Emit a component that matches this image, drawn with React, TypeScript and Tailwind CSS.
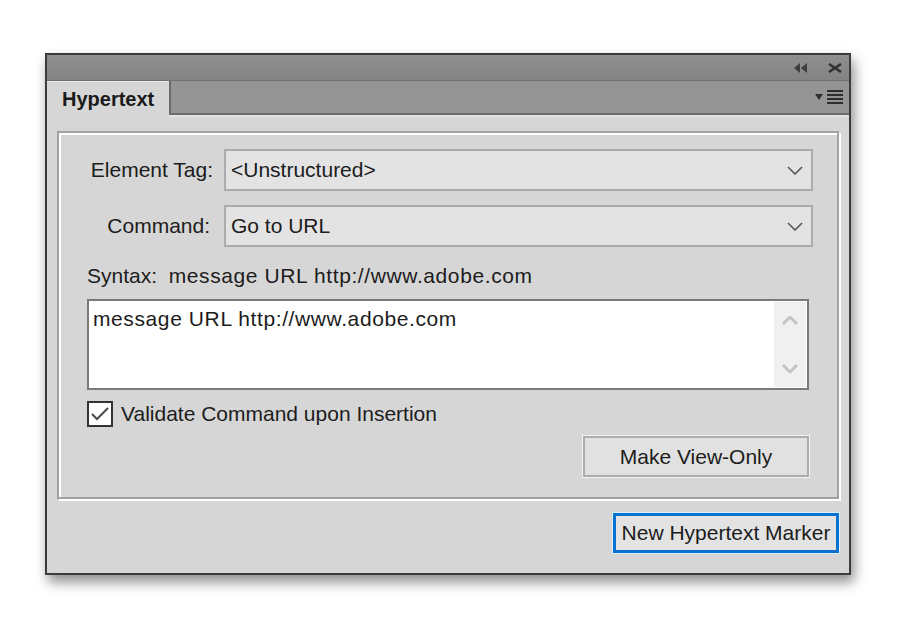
import React from "react";

const Chevron = ({ up = false, color = "#555555", width = 1.6 }: { up?: boolean; color?: string; width?: number }) => (
  <svg width="16" height="9" viewBox="0 0 16 9">
    <polyline
      points={up ? "1,8 8,1 15,8" : "1,1 8,8 15,1"}
      fill="none"
      stroke={color}
      strokeWidth={width}
    />
  </svg>
);

const Dropdown = ({ value }: { value: string }) => (
  <div className="flex-1 h-[42px] flex items-center justify-between border-2 border-[#ababab] bg-[#e3e3e3] pl-[5px] pr-[8px]">
    <span>{value}</span>
    <Chevron />
  </div>
);

export default function App() {
  return (
    <div
      className="min-h-screen bg-white pt-[53px] pl-[45px] text-[21px] leading-[24px] text-[#1c1c1c]"
      style={{ fontFamily: '"Liberation Sans", Arial, sans-serif' }}
    >
      <div className="w-[806px] h-[522px] border-2 border-[#3b3b3b] bg-[#d6d6d6] shadow-[3px_7px_12px_rgba(0,0,0,0.45)] flex flex-col">
        {/* Title bar */}
        <div className="h-[26px] bg-gradient-to-b from-[#8f8f8f] to-[#838383] border-b border-[#6f6f6f] flex items-center justify-end gap-[20px] pr-[7px]">
          <svg width="14" height="10" viewBox="0 0 14 10">
            <polygon points="0,5 6,0 6,10" fill="#3e3e3e" />
            <polygon points="7,5 13,0 13,10" fill="#3e3e3e" />
          </svg>
          <svg width="14" height="10" viewBox="0 0 14 10">
            <path d="M1,1 L13,9 M13,1 L1,9" stroke="#333333" strokeWidth="2.6" />
          </svg>
        </div>

        {/* Tab row */}
        <div className="h-[34px] flex bg-[#949494]">
          <div className="w-[122px] bg-[#d6d6d6] border-t border-[#ececec] flex items-center pl-[15px] font-bold text-[20px] text-[#1a1a1a]">
            Hypertext
          </div>
          <div className="flex-1 border-l-2 border-b-2 border-[#6c6c6c] shadow-[0_2px_0_#e4e4e4] flex items-center justify-end pr-[6px] gap-[4px]">
            <svg width="8" height="7" viewBox="0 0 8 7">
              <polygon points="0,0 8,0 4,6" fill="#2e2e2e" />
            </svg>
            <svg width="16" height="14" viewBox="0 0 16 14">
              <rect x="0" y="0" width="16" height="2" fill="#2e2e2e" />
              <rect x="0" y="4" width="16" height="2" fill="#2e2e2e" />
              <rect x="0" y="8" width="16" height="2" fill="#2e2e2e" />
              <rect x="0" y="12" width="16" height="2" fill="#2e2e2e" />
            </svg>
          </div>
        </div>

        {/* Body */}
        <div className="flex-1 flex flex-col pt-[16px] pl-[10px] pr-[10px]">
          <div className="h-[368px] border-2 border-[#a2a2a2] shadow-[inset_2px_2px_0_#ffffff,2px_2px_0_#ffffff] flex flex-col pt-[16px] pl-[28px] pr-[24px]">
            <div className="flex items-center">
              <span className="w-[137px] text-right pr-[11px] whitespace-nowrap">Element Tag:</span>
              <Dropdown value="<Unstructured>" />
            </div>
            <div className="flex items-center mt-[14px]">
              <span className="w-[137px] text-right pr-[14px] whitespace-nowrap">Command:</span>
              <Dropdown value="Go to URL" />
            </div>
            <div className="mt-[17px] h-[24px] whitespace-nowrap">
              Syntax:&nbsp; <span className="tracking-[0.6px]">message URL http://www.adobe.com</span>
            </div>
            <div className="mt-[11px] mr-[4px] h-[91px] border-2 border-[#7a7a7a] bg-white flex">
              <div className="flex-1 pl-[4px] pt-[6px] tracking-[0.6px]">message URL http://www.adobe.com</div>
              <div className="w-[32px] my-[1px] mr-[1px] bg-[#f0f0f0] flex flex-col items-center justify-between py-[14px]">
                <Chevron up color="#c4c4c4" width={3} />
                <Chevron color="#c4c4c4" width={3} />
              </div>
            </div>
            <div className="mt-[11px] flex items-center">
              <div className="w-[26px] h-[26px] border-2 border-[#333333] bg-white flex items-center justify-center">
                <svg width="20" height="16" viewBox="0 0 20 16">
                  <polyline points="2,8 7,13 18,2" fill="none" stroke="#4a4a4a" strokeWidth="2" />
                </svg>
              </div>
              <span className="ml-[8px]">Validate Command upon Insertion</span>
            </div>
            <div className="mt-[9px] mr-[4px] flex justify-end">
              <div className="w-[226px] h-[41px] border-2 border-[#adadad] bg-[#e1e1e1] shadow-[0_0_0_1px_#f2f2f2] flex items-center justify-center">
                Make View-Only
              </div>
            </div>
          </div>
          <div className="mt-[14px] flex justify-end">
            <div className="w-[226px] h-[40px] border-[3px] border-[#0a72cc] bg-[#e3e3e3] shadow-[0_0_0_1px_#dcefff] flex items-center justify-center">
              New Hypertext Marker
            </div>
          </div>
        </div>
      </div>
    </div>
  );
}
